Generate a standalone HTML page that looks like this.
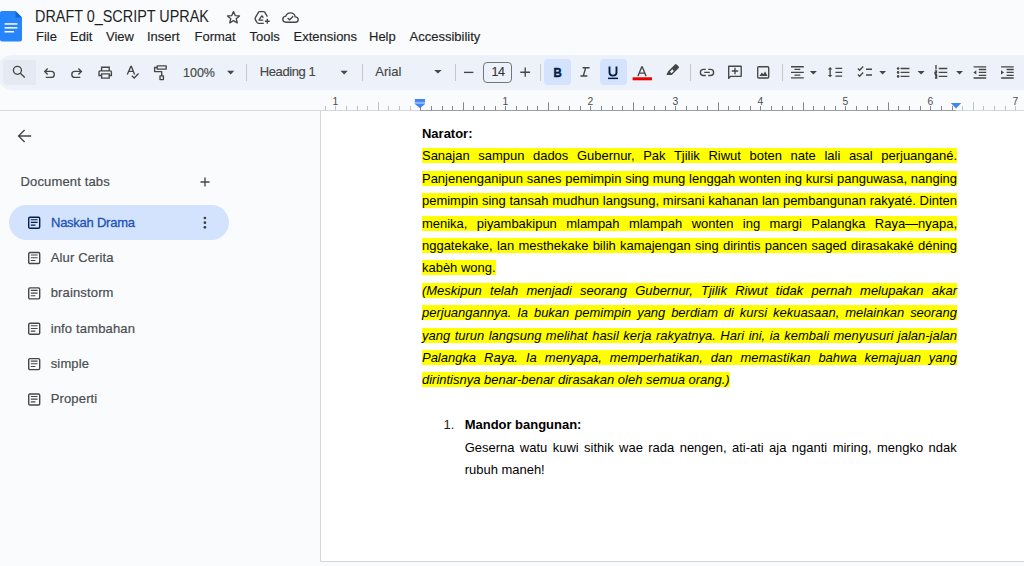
<!DOCTYPE html>
<html><head><meta charset="utf-8">
<style>
*{margin:0;padding:0;box-sizing:border-box}
html,body{width:1024px;height:566px;overflow:hidden;background:#f9fbfd;font-family:"Liberation Sans",sans-serif;color:#1f1f1f}
.a{position:absolute;white-space:pre}
svg{position:absolute;overflow:visible}
#title{left:35.3px;top:7px;font-size:16px;line-height:20px;color:#1f1f1f;transform-origin:0 0;transform:scaleX(0.9)}
.menu{top:29px;font-size:13px;line-height:16px;color:#1f1f1f;-webkit-text-stroke:0.15px #1f1f1f}
#toolbar{position:absolute;left:-4px;top:55px;width:1064px;height:34.5px;background:#edf2fa;border-radius:17.25px}
.tt{font-size:12.5px;line-height:16px;color:#444746;-webkit-text-stroke:0.15px #444746}
.sep{position:absolute;top:64px;width:1px;height:17px;background:#c7c7c7}
.btn{position:absolute;top:59px;width:26.5px;height:26px;border-radius:4px;background:#d3e3fd}
#ruler{position:absolute;left:0;top:110px;width:1024px;height:1px;background:#d5d8dc}
#rulerin{position:absolute;left:420px;top:110px;width:536px;height:1px;background:#9aa0a6}
#page{position:absolute;left:320px;top:111px;width:800px;height:451px;background:#fff;border-left:1px solid #d5d7da;border-bottom:1px solid #d5d7da}
.side{font-size:13px;line-height:16px;color:#4a4d50;letter-spacing:0.15px;-webkit-text-stroke:0.2px #4a4d50}
.doc{position:absolute;left:422px;width:535px;font-family:"Liberation Sans",sans-serif;font-size:12.98px;line-height:22.4px;color:#000;white-space:normal}
.j{text-align:justify;text-align-last:justify}
.hl{background:#ffff00}
.ic{fill:none;stroke:#444746;stroke-width:1.35}
</style></head><body>
<!-- header -->
<svg style="left:0;top:0" width="23" height="44" viewBox="0 0 23 44">
  <path d="M0 13 Q0 11 2 11 H15.5 L22 17.5 V39.5 Q22 41.5 20 41.5 H2 Q0 41.5 0 39.5 Z" fill="#2684fc"/>
  <path d="M15.5 11 L22 17.5 H15.5 Z" fill="#0a66da"/>
  <rect x="4.6" y="23.2" width="12.8" height="1.5" fill="#fff"/>
  <rect x="4.6" y="27.1" width="12.8" height="1.5" fill="#fff"/>
  <rect x="4.6" y="31" width="9.5" height="1.5" fill="#fff"/>
</svg>
<div id="title" class="a">DRAFT 0_SCRIPT UPRAK</div>
<svg style="left:0;top:0" width="310" height="30">
  <path class="ic" d="M233.5 11.6 L235.2 15.6 L239.5 15.9 L236.2 18.7 L237.3 22.9 L233.5 20.6 L229.7 22.9 L230.8 18.7 L227.5 15.9 L231.8 15.6 Z" stroke-linejoin="round"/>
  <path class="ic" d="M264.4 11.6 H259.4 Q258.9 11.6 258.6 12.1 L255.5 17.4 Q254.8 18.7 255.5 19.9 L257 22.5 Q257.5 23.3 258.3 23.3 H263.8 M264.4 11.6 L267.4 16.6 M261.9 15.5 L259 20.1 H263.3 M261.9 15.5 L263.3 17.9 M267.3 18.8 V23.7 M264.9 21.2 H269.7" stroke-width="1.45" stroke-linejoin="round"/>
  <path class="ic" d="M286 22.2 H295.5 Q298.2 22.2 298.2 19.5 Q298.2 17 295.2 16.8 Q294.5 12.8 290.3 12.8 Q286.8 12.8 285.8 16.2 Q282.8 16.6 282.8 19.3 Q282.8 22.2 286 22.2 Z M287.6 17.9 L289.6 19.8 L293.2 16.2"/>
</svg>
<div class="a menu" style="left:36px">File</div>
<div class="a menu" style="left:70px">Edit</div>
<div class="a menu" style="left:106px">View</div>
<div class="a menu" style="left:147px">Insert</div>
<div class="a menu" style="left:194.5px">Format</div>
<div class="a menu" style="left:249.5px">Tools</div>
<div class="a menu" style="left:293.5px">Extensions</div>
<div class="a menu" style="left:369px">Help</div>
<div class="a menu" style="left:409.5px">Accessibility</div>

<div id="toolbar"></div>
<div style="position:absolute;left:3px;top:60px;width:33px;height:25px;border-radius:4px 0 0 4px;background:#e4e9f2"></div>
<div class="btn" style="left:544.2px"></div>
<div class="btn" style="left:600.3px"></div>
<div class="sep" style="left:246px"></div>
<div class="sep" style="left:361.5px"></div>
<div class="sep" style="left:455px"></div>
<div class="sep" style="left:539.5px"></div>
<div class="sep" style="left:689.5px"></div>
<div class="sep" style="left:782px"></div>
<div class="a tt" style="left:183px;top:64.5px">100%</div>
<div class="a tt" style="left:259.8px;top:64px;font-size:13px;letter-spacing:-0.42px">Heading 1</div>
<div class="a tt" style="left:375.3px;top:64px;font-size:13px">Arial</div>
<div style="position:absolute;left:483px;top:62.2px;width:29.3px;height:20.6px;border:1px solid #747775;border-radius:4px"></div>
<div class="a tt" style="left:491.4px;top:63.6px;color:#303133;letter-spacing:-0.4px">14</div>
<svg style="left:0;top:0" width="1024" height="90">
  <!-- search -->
  <circle class="ic" cx="17.4" cy="70.3" r="4" stroke-width="1.5"/>
  <path class="ic" d="M20.3 73.2 L24.8 77.6" stroke-width="1.6"/>
  <!-- undo -->
  <path class="ic" d="M47.7 68.4 L44.7 71.4 L47.7 74.4 M45 71.4 H51.3 A3 3 0 0 1 51.3 77.4 H45.8" stroke-width="1.4"/>
  <!-- redo -->
  <path class="ic" d="M78.4 68.4 L81.4 71.4 L78.4 74.4 M81.1 71.4 H74.8 A3 3 0 0 0 74.8 77.4 H80.3" stroke-width="1.4"/>
  <!-- print -->
  <path class="ic" d="M101.6 70.5 V67.2 H109.2 V70.5 M101.6 75.5 H99 V72 Q99 70.9 100.1 70.9 H110.3 Q111.4 70.9 111.4 72 V75.5 H109.2 M101.6 73.9 H109.2 V78.1 H101.6 Z" stroke-width="1.4"/>
  <!-- spellcheck -->
  <path class="ic" d="M127.3 74.5 L130.8 66.5 H131.4 L134.6 74.5 M128.6 71.4 H133.4 M131.8 75.7 L134.2 78 L138.6 73.5" stroke-width="1.4"/>
  <!-- paint format -->
  <path class="ic" d="M157.2 65.9 H166.2 V69.1 H157.2 Z M157.2 67.5 H154.6 V71.6 H161.7 V75.8 M160 75.8 H163.4 V79.6 H160 Z" stroke-width="1.35" stroke-linejoin="round"/>
  <!-- dropdown arrows -->
  <path d="M227 70.8 H234.3 L230.65 74.4 Z" fill="#444746"/>
  <path d="M340.5 70.8 H347.8 L344.15 74.4 Z" fill="#444746"/>
  <path d="M434.2 70 H441.7 L437.95 73.6 Z" fill="#444746"/>
  <!-- minus plus -->
  <path class="ic" d="M464 72.4 H473.4" stroke-width="1.5"/>
  <path class="ic" d="M520.3 72.2 H530.1 M525.2 67.5 V76.8" stroke-width="1.5"/>
  <!-- B I U A -->
  <text transform="translate(553.5 76.7) scale(0.86 1)" font-family="Liberation Sans" font-weight="bold" font-size="13.3" fill="#041e49" stroke="#041e49" stroke-width="0.5">B</text>
  <path class="ic" d="M582.6 67.7 H589.6 M580.4 76 H587.4 M585.7 67.7 L583.3 76" stroke-width="1.75"/>
  <path d="M609.5 66.6 V72.2 Q609.5 75.6 613 75.6 Q616.5 75.6 616.5 72.2 V66.6" fill="none" stroke="#041e49" stroke-width="1.9"/>
  <rect x="608" y="77.6" width="10" height="1.5" fill="#041e49"/>
  <path class="ic" d="M637.9 76.2 L641.7 67 H642.3 L646.1 76.2 M639.2 73.1 H644.8" stroke-width="1.4"/>
  <rect x="632.6" y="77.3" width="19.4" height="3" fill="#ea0000"/>
  <!-- highlighter -->
  <path d="M666.4 74.9 L668.1 71.2 L675 64.4 Q675.8 63.7 676.6 64.4 L678.7 66.5 Q679.4 67.3 678.7 68.1 L671.8 75 Z M669.9 71.7 L672.3 69.3 L673.9 70.9 L671.5 73.3 Z" fill="#444746" fill-rule="evenodd"/>
  <!-- link -->
  <path class="ic" d="M705.8 69.3 H703.5 A3.1 3.1 0 0 0 703.5 75.5 H705.8 M708.2 69.3 H710.5 A3.1 3.1 0 0 1 710.5 75.5 H708.2 M704.2 72.4 H709.8" stroke-width="1.55"/>
  <!-- comment -->
  <path class="ic" d="M728.7 78.4 V66.2 H741.2 V76.3 H730.7 Z" stroke-width="1.4" stroke-linejoin="round"/>
  <path class="ic" d="M731.8 71 H738.2 M735 67.8 V74.2" stroke-width="1.5"/>
  <!-- image -->
  <rect class="ic" x="757.7" y="66.7" width="11" height="11.3" rx="1" stroke-width="1.4"/>
  <path d="M759.4 76.1 L761.9 72.6 L763.3 74.3 L765.1 71.5 L767.6 76.1 Z" fill="#444746"/>
  <!-- align center -->
  <path class="ic" d="M791 66.7 H803.8 M794.5 69.4 H800.3 M791 72.3 H803.8 M794.5 75.1 H800.3 M791 77.9 H803.8" stroke-width="1.3"/>
  <path d="M809.8 71.1 H816.9 L813.35 74.6 Z" fill="#444746"/>
  <!-- line spacing -->
  <path d="M830.1 67 L827.8 69.4 H832.4 Z M830.1 77.3 L827.8 74.9 H832.4 Z" fill="#444746"/>
  <path class="ic" d="M830.1 69 V75.3 M835.4 68.4 H842.2 M835.4 72.3 H842.2 M835.4 76.1 H842.2" stroke-width="1.3"/>
  <!-- checklist -->
  <path class="ic" d="M857.9 68.5 L859.6 70.2 L863.2 66.6 M857.9 74.5 L859.6 76.2 L863.2 72.6 M866 69.2 H872 M866 75 H872" stroke-width="1.3"/>
  <path d="M879.3 71 H886 L882.65 74.6 Z" fill="#444746"/>
  <!-- bullets -->
  <circle cx="898.1" cy="68.5" r="1.3" fill="#444746"/><circle cx="898.1" cy="72.4" r="1.3" fill="#444746"/><circle cx="898.1" cy="76.4" r="1.3" fill="#444746"/>
  <path class="ic" d="M900.6 68.5 H909.4 M900.6 72.4 H909.4 M900.6 76.4 H909.4" stroke-width="1.3"/>
  <path d="M917.5 71.1 H924.7 L921.1 74.5 Z" fill="#444746"/>
  <!-- numbered -->
  <path class="ic" d="M935.2 66.3 L936 65.9 V69.5 M934.9 70.9 H936.5 V72.3 H935 V73.6 H936.7 M934.9 75 H936.6 V78 H934.9 M935.3 76.5 H936.6" stroke-width="0.9"/>
  <path class="ic" d="M938.7 68.5 H947.3 M938.7 72.4 H947.3 M938.7 76.4 H947.3" stroke-width="1.3"/>
  <path d="M956.1 71.1 H963 L959.55 74.5 Z" fill="#444746"/>
  <!-- decrease indent -->
  <path class="ic" d="M973.6 66.8 H986.2 M978.8 69.5 H986.2 M978.8 72.4 H986.2 M978.8 75.3 H986.2 M973.6 78 H986.2" stroke-width="1.4"/>
  <path d="M976.3 70.2 L973.4 72.4 L976.3 74.6 Z" fill="#444746"/>
  <!-- increase indent -->
  <path class="ic" d="M1001.1 66.8 H1013.7 M1006.6 69.5 H1013.7 M1006.6 72.4 H1013.7 M1006.6 75.3 H1013.7 M1001.1 78 H1013.7" stroke-width="1.4"/>
  <path d="M1001 70.2 L1004 72.4 L1001 74.6 Z" fill="#444746"/>
</svg>

<div id="ruler"></div>
<div id="rulerin"></div>
<svg id="ticks" style="left:0;top:90px" width="1024" height="22"><rect x="325" y="16" width="1" height="4.3" fill="#bdc1c6"/><rect x="335" y="16" width="1" height="4.3" fill="#bdc1c6"/><rect x="346" y="16" width="1" height="4.3" fill="#bdc1c6"/><rect x="357" y="16" width="1" height="4.3" fill="#bdc1c6"/><rect x="367" y="16" width="1" height="4.3" fill="#bdc1c6"/><rect x="378" y="12.3" width="1" height="8" fill="#bdc1c6"/><rect x="388" y="16" width="1" height="4.3" fill="#bdc1c6"/><rect x="399" y="16" width="1" height="4.3" fill="#bdc1c6"/><rect x="410" y="16" width="1" height="4.3" fill="#bdc1c6"/><rect x="420" y="16" width="1" height="4.3" fill="#80868b"/><rect x="431" y="16" width="1" height="4.3" fill="#80868b"/><rect x="442" y="16" width="1" height="4.3" fill="#80868b"/><rect x="452" y="16" width="1" height="4.3" fill="#80868b"/><rect x="463" y="12.3" width="1" height="8" fill="#80868b"/><rect x="473" y="16" width="1" height="4.3" fill="#80868b"/><rect x="484" y="16" width="1" height="4.3" fill="#80868b"/><rect x="495" y="16" width="1" height="4.3" fill="#80868b"/><rect x="505" y="16" width="1" height="4.3" fill="#80868b"/><rect x="516" y="16" width="1" height="4.3" fill="#80868b"/><rect x="527" y="16" width="1" height="4.3" fill="#80868b"/><rect x="537" y="16" width="1" height="4.3" fill="#80868b"/><rect x="548" y="12.3" width="1" height="8" fill="#80868b"/><rect x="558" y="16" width="1" height="4.3" fill="#80868b"/><rect x="569" y="16" width="1" height="4.3" fill="#80868b"/><rect x="580" y="16" width="1" height="4.3" fill="#80868b"/><rect x="590" y="16" width="1" height="4.3" fill="#80868b"/><rect x="601" y="16" width="1" height="4.3" fill="#80868b"/><rect x="612" y="16" width="1" height="4.3" fill="#80868b"/><rect x="622" y="16" width="1" height="4.3" fill="#80868b"/><rect x="633" y="12.3" width="1" height="8" fill="#80868b"/><rect x="643" y="16" width="1" height="4.3" fill="#80868b"/><rect x="654" y="16" width="1" height="4.3" fill="#80868b"/><rect x="665" y="16" width="1" height="4.3" fill="#80868b"/><rect x="675" y="16" width="1" height="4.3" fill="#80868b"/><rect x="686" y="16" width="1" height="4.3" fill="#80868b"/><rect x="697" y="16" width="1" height="4.3" fill="#80868b"/><rect x="707" y="16" width="1" height="4.3" fill="#80868b"/><rect x="718" y="12.3" width="1" height="8" fill="#80868b"/><rect x="728" y="16" width="1" height="4.3" fill="#80868b"/><rect x="739" y="16" width="1" height="4.3" fill="#80868b"/><rect x="750" y="16" width="1" height="4.3" fill="#80868b"/><rect x="760" y="16" width="1" height="4.3" fill="#80868b"/><rect x="771" y="16" width="1" height="4.3" fill="#80868b"/><rect x="782" y="16" width="1" height="4.3" fill="#80868b"/><rect x="792" y="16" width="1" height="4.3" fill="#80868b"/><rect x="803" y="12.3" width="1" height="8" fill="#80868b"/><rect x="813" y="16" width="1" height="4.3" fill="#80868b"/><rect x="824" y="16" width="1" height="4.3" fill="#80868b"/><rect x="835" y="16" width="1" height="4.3" fill="#80868b"/><rect x="845" y="16" width="1" height="4.3" fill="#80868b"/><rect x="856" y="16" width="1" height="4.3" fill="#80868b"/><rect x="867" y="16" width="1" height="4.3" fill="#80868b"/><rect x="877" y="16" width="1" height="4.3" fill="#80868b"/><rect x="888" y="12.3" width="1" height="8" fill="#80868b"/><rect x="898" y="16" width="1" height="4.3" fill="#80868b"/><rect x="909" y="16" width="1" height="4.3" fill="#80868b"/><rect x="920" y="16" width="1" height="4.3" fill="#80868b"/><rect x="930" y="16" width="1" height="4.3" fill="#80868b"/><rect x="941" y="16" width="1" height="4.3" fill="#80868b"/><rect x="952" y="16" width="1" height="4.3" fill="#80868b"/><rect x="962" y="16" width="1" height="4.3" fill="#bdc1c6"/><rect x="973" y="12.3" width="1" height="8" fill="#bdc1c6"/><rect x="983" y="16" width="1" height="4.3" fill="#bdc1c6"/><rect x="994" y="16" width="1" height="4.3" fill="#bdc1c6"/><rect x="1005" y="16" width="1" height="4.3" fill="#bdc1c6"/><rect x="1015" y="16" width="1" height="4.3" fill="#bdc1c6"/><text x="335.3" y="14.6" text-anchor="middle" font-family="Liberation Sans" font-size="10.3" fill="#4a4d50">1</text><text x="505.3" y="14.6" text-anchor="middle" font-family="Liberation Sans" font-size="10.3" fill="#4a4d50">1</text><text x="590.3" y="14.6" text-anchor="middle" font-family="Liberation Sans" font-size="10.3" fill="#4a4d50">2</text><text x="675.3" y="14.6" text-anchor="middle" font-family="Liberation Sans" font-size="10.3" fill="#4a4d50">3</text><text x="760.3" y="14.6" text-anchor="middle" font-family="Liberation Sans" font-size="10.3" fill="#4a4d50">4</text><text x="845.3" y="14.6" text-anchor="middle" font-family="Liberation Sans" font-size="10.3" fill="#4a4d50">5</text><text x="930.3" y="14.6" text-anchor="middle" font-family="Liberation Sans" font-size="10.3" fill="#4a4d50">6</text><text x="1015.3" y="14.6" text-anchor="middle" font-family="Liberation Sans" font-size="10.3" fill="#4a4d50">7</text><path d="M414.9 8.9 H425 V14 L420 18.3 L414.9 14 Z" fill="#4285f4"/><rect x="414.9" y="11.8" width="10.1" height="2.2" fill="#8ab4f8"/><path d="M950.7 13 H961.3 L956 18.4 Z" fill="#4285f4"/></svg>
<div id="page"></div>

<!-- sidebar -->
<svg style="left:0;top:120px" width="240" height="300">
  <path class="ic" d="M31.2 16 H18.5 M24.6 9.9 L18.5 16 L24.6 22.1" stroke-width="1.7" stroke="#444746"/>
  <path class="ic" d="M200.5 62 H209.5 M205 57.5 V66.5" stroke-width="1.4"/>
</svg>
<div class="a side" style="left:20.5px;top:174px">Document tabs</div>
<div style="position:absolute;left:9px;top:205.2px;width:219.5px;height:35px;border-radius:17.5px;background:#d3e3fd"></div>
<div class="a side" style="left:51px;top:214.5px;color:#1a52b8;-webkit-text-stroke:0.3px #1a52b8;letter-spacing:-0.25px">Naskah Drama</div>
<svg style="left:0;top:0" width="240" height="420">
  <circle cx="204.9" cy="218" r="1.35" fill="#3c3f41"/><circle cx="204.9" cy="222.7" r="1.35" fill="#3c3f41"/><circle cx="204.9" cy="227.3" r="1.35" fill="#3c3f41"/>
  <g id="docicons"><g transform="translate(28,216.50)" fill="none" stroke="#041e49" stroke-width="1.4"><rect x="0.7" y="0.7" width="11" height="11" rx="1.3"/><path d="M2.8 3.2 H9.6 M2.8 5.9 H9.6 M2.8 8.6 H7.4" stroke-width="1.1"/></g><g transform="translate(28,251.85)" fill="none" stroke="#444746" stroke-width="1.4"><rect x="0.7" y="0.7" width="11" height="11" rx="1.3"/><path d="M2.8 3.2 H9.6 M2.8 5.9 H9.6 M2.8 8.6 H7.4" stroke-width="1.1"/></g><g transform="translate(28,287.20)" fill="none" stroke="#444746" stroke-width="1.4"><rect x="0.7" y="0.7" width="11" height="11" rx="1.3"/><path d="M2.8 3.2 H9.6 M2.8 5.9 H9.6 M2.8 8.6 H7.4" stroke-width="1.1"/></g><g transform="translate(28,322.55)" fill="none" stroke="#444746" stroke-width="1.4"><rect x="0.7" y="0.7" width="11" height="11" rx="1.3"/><path d="M2.8 3.2 H9.6 M2.8 5.9 H9.6 M2.8 8.6 H7.4" stroke-width="1.1"/></g><g transform="translate(28,357.90)" fill="none" stroke="#444746" stroke-width="1.4"><rect x="0.7" y="0.7" width="11" height="11" rx="1.3"/><path d="M2.8 3.2 H9.6 M2.8 5.9 H9.6 M2.8 8.6 H7.4" stroke-width="1.1"/></g><g transform="translate(28,393.25)" fill="none" stroke="#444746" stroke-width="1.4"><rect x="0.7" y="0.7" width="11" height="11" rx="1.3"/><path d="M2.8 3.2 H9.6 M2.8 5.9 H9.6 M2.8 8.6 H7.4" stroke-width="1.1"/></g></g>
</svg>
<div class="a side" style="left:50.7px;top:250px">Alur Cerita</div>
<div class="a side" style="left:50.7px;top:285.3px">brainstorm</div>
<div class="a side" style="left:50.7px;top:320.6px">info tambahan</div>
<div class="a side" style="left:50.7px;top:356px">simple</div>
<div class="a side" style="left:50.7px;top:391.3px">Properti</div>

<!-- document -->
<div class="doc" style="top:123px"><b>Narator:</b></div>
<div class="doc j" style="top:145.4px"><span class="hl">Sanajan sampun dados Gubernur, Pak Tjilik Riwut boten nate lali asal perjuangané.</span></div>
<div class="doc j" style="top:167.8px"><span class="hl">Panjenenganipun sanes pemimpin sing mung lenggah wonten ing kursi panguwasa, nanging</span></div>
<div class="doc j" style="top:190.2px"><span class="hl">pemimpin sing tansah mudhun langsung, mirsani kahanan lan pembangunan rakyaté. Dinten</span></div>
<div class="doc j" style="top:212.6px"><span class="hl">menika, piyambakipun mlampah mlampah wonten ing margi Palangka Raya—nyapa,</span></div>
<div class="doc j" style="top:235px"><span class="hl">nggatekake, lan mesthekake bilih kamajengan sing dirintis pancen saged dirasakaké déning</span></div>
<div class="doc" style="top:257.4px"><span class="hl">kabèh wong.</span></div>
<div class="doc j" style="top:279.8px"><i class="hl">(Meskipun telah menjadi seorang Gubernur, Tjilik Riwut tidak pernah melupakan akar</i></div>
<div class="doc j" style="top:302.2px"><i class="hl">perjuangannya. Ia bukan pemimpin yang berdiam di kursi kekuasaan, melainkan seorang</i></div>
<div class="doc j" style="top:324.6px"><i class="hl">yang turun langsung melihat hasil kerja rakyatnya. Hari ini, ia kembali menyusuri jalan-jalan</i></div>
<div class="doc j" style="top:347px"><i class="hl">Palangka Raya. Ia menyapa, memperhatikan, dan memastikan bahwa kemajuan yang</i></div>
<div class="doc" style="top:369.4px"><i class="hl">dirintisnya benar-benar dirasakan oleh semua orang.)</i></div>
<div class="doc" style="top:414px;left:443.5px;color:#222">1.</div>
<div class="doc" style="top:414px;left:464.7px;width:492px"><b>Mandor bangunan:</b></div>
<div class="doc j" style="top:436.6px;left:464.7px;width:492px">Geserna watu kuwi sithik wae rada nengen, ati-ati aja nganti miring, mengko ndak</div>
<div class="doc" style="top:459px;left:464.7px;width:492px">rubuh maneh!</div>
</body></html>
